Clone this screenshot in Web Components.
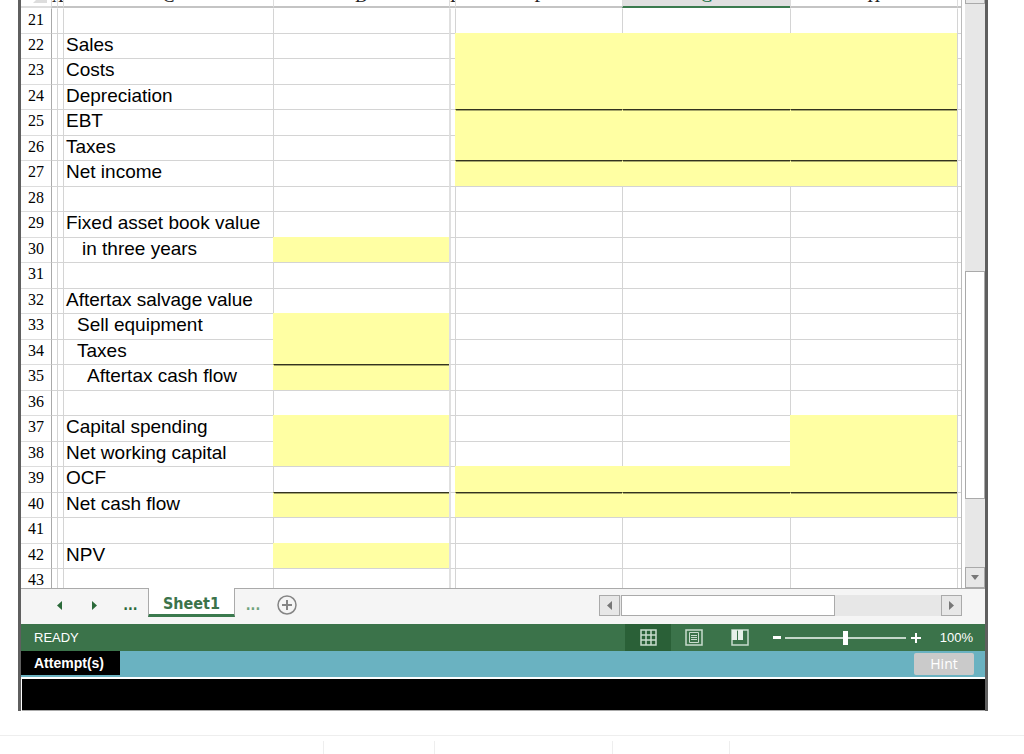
<!DOCTYPE html>
<html lang="en">
<head>
<meta charset="utf-8">
<title>Sheet1</title>
<style>
    body {
        margin: 0;
        background: #fff;
        font-family: "Liberation Sans", Arial, sans-serif;
        overflow: hidden;
    }
</style>
</head>
<body>
<sheet-window>
    <sheet-grid></sheet-grid>
    <scroll-rail slot="rail"></scroll-rail>
    <sheet-tabs slot="footer">Sheet1</sheet-tabs>
    <status-bar slot="footer">READY</status-bar>
    <attempt-bar slot="footer">Attempt(s)</attempt-bar>
</sheet-window>
<page-footer></page-footer>

<script>
class SheetWindow extends HTMLElement {
    constructor() {
        super();
        this.attachShadow({ mode: 'open' });
    }

    connectedCallback() {
        this.shadowRoot.innerHTML = `
            <style>
                :host {
                    display: block;
                    margin: 0 36px 0 18px;
                    border: 0 solid #5f5f5f;
                    border-width: 0 3px;
                }
                .view {
                    display: flex;
                }
                .sheet {
                    flex: 1;
                    min-width: 0;
                    overflow: hidden;
                }
                .log {
                    height: 31px;
                    margin-left: 1px;
                    background: #000;
                    border-top: 2px solid #fff;
                    border-bottom: 1px solid #aaa;
                }
            </style>
            <div class="view">
                <div class="sheet"><slot></slot></div>
                <slot name="rail"></slot>
            </div>
            <slot name="footer"></slot>
            <div class="log"></div>
        `;
    }
}

const COLUMNS = ['A', 'B', 'C', 'D', 'E', 'F', 'G', 'H', ''];
const YEARS = 'FGH';

// fill: input cells, total: cells with a dark line above them
const ROWS = {
    22: { label: 'Sales', fill: YEARS },
    23: { label: 'Costs', fill: YEARS },
    24: { label: 'Depreciation', fill: YEARS },
    25: { label: 'EBT', fill: YEARS, total: YEARS },
    26: { label: 'Taxes', fill: YEARS },
    27: { label: 'Net income', fill: YEARS, total: YEARS },
    29: { label: 'Fixed asset book value' },
    30: { label: 'in three years', indent: 'mid', fill: 'D' },
    32: { label: 'Aftertax salvage value' },
    33: { label: 'Sell equipment', indent: 'low', fill: 'D' },
    34: { label: 'Taxes', indent: 'low', fill: 'D' },
    35: { label: 'Aftertax cash flow', indent: 'high', fill: 'D', total: 'D' },
    37: { label: 'Capital spending', fill: 'DH' },
    38: { label: 'Net working capital', fill: 'DH' },
    39: { label: 'OCF', fill: YEARS },
    40: { label: 'Net cash flow', fill: 'DFGH', total: 'DFGH' },
    42: { label: 'NPV', fill: 'D' }
};

class SheetGrid extends HTMLElement {
    constructor() {
        super();
        this.attachShadow({ mode: 'open' });
    }

    connectedCallback() {
        this.render();
    }

    renderCell(name, row) {
        const classes = [];
        if (name === 'C' && row.indent) classes.push(row.indent);
        if (name === 'E') classes.push('split');
        if (name && row.fill && row.fill.includes(name)) classes.push('fill');
        if (name && row.total && row.total.includes(name)) classes.push('total');
        return `<td class="${classes.join(' ')}">${name === 'C' && row.label ? row.label : ''}</td>`;
    }

    render() {
        let rowsHtml = '';
        for (let n = 21; n <= 43; n++) {
            const row = ROWS[n] || {};
            rowsHtml += `
                <tr>
                    <th scope="row">${n}</th>
                    ${COLUMNS.map(name => this.renderCell(name, row)).join('')}
                </tr>`;
        }

        this.shadowRoot.innerHTML = `
            <style>
                :host {
                    display: block;
                    height: 588px;
                    overflow: hidden;
                    margin-right: 3px;
                }
                table {
                    width: 100%;
                    margin-top: -18px;
                    table-layout: fixed;
                    border-collapse: separate;
                    border-spacing: 0;
                    border-right: 1px solid #bbb;
                }
                .number { width: 30px; }
                .sliver { width: 6px; }
                .label { width: 210px; }
                .base { width: 176px; }
                .edge { width: 4px; }
                th, td {
                    padding: 0;
                    box-sizing: border-box;
                    overflow: hidden;
                    white-space: nowrap;
                }
                thead th {
                    height: 26px;
                    padding-top: 4px;
                    font: 18px/20px "Liberation Serif", "Times New Roman", serif;
                    color: #222;
                    border-left: 1px solid #ddd;
                    border-bottom: 2px solid #c4c4c4;
                }
                thead th:first-child {
                    border-left: 0;
                    border-bottom-color: #ddd;
                }
                thead th.active {
                    background: #e0e0e0;
                    color: #217346;
                    border-bottom-color: #3b7a4e;
                }
                thead svg {
                    display: block;
                    margin-left: 12px;
                }
                tbody th {
                    font: 16px/22px "Liberation Serif", "Times New Roman", serif;
                    color: #000;
                    border-top: 1px solid #ddd;
                    vertical-align: top;
                }
                tbody td {
                    height: 25px;
                    padding-left: 2px;
                    font-size: 19px;
                    line-height: 21px;
                    color: #000;
                    border-left: 1px solid #d4d4d4;
                    border-top: 1px solid #d4d4d4;
                    vertical-align: top;
                }
                tbody tr:nth-child(odd) td { height: 26px; }
                tbody tr:first-child td { height: 25px; }
                tbody tr:first-child th, tbody tr:first-child td { border-top-color: transparent; }
                tbody td:nth-child(2) { border-left-color: #aaa; }
                tbody td:nth-child(2), tbody td:nth-child(3) { padding: 0; }
                tbody td.split { border-left: 2px solid #e0e0e0; padding: 0; }
                tbody td:last-child { padding: 0; }
                td.low { padding-left: 13px; }
                td.mid { padding-left: 18px; }
                td.high { padding-left: 23px; }
                tbody td.fill {
                    background: #ffffa3;
                    border-color: #ffffa3;
                }
                tbody td.total {
                    border-top-color: #33331f;
                    box-shadow: inset 0 1px rgba(0, 0, 0, 0.35);
                }
            </style>
            <table>
                <colgroup>
                    <col class="number"><col class="sliver"><col class="sliver">
                    <col class="label"><col class="base"><col class="sliver">
                    <col><col><col><col class="edge">
                </colgroup>
                <thead>
                    <tr>
                        <th><svg width="14" height="14"><path d="M14 0V14H0Z" fill="#ddd"/></svg></th>
                        ${COLUMNS.map(name => `<th class="${name === 'G' ? 'active' : ''}">${name}</th>`).join('')}
                    </tr>
                </thead>
                <tbody>${rowsHtml}</tbody>
            </table>
        `;
    }
}

class ScrollRail extends HTMLElement {
    constructor() {
        super();
        this.attachShadow({ mode: 'open' });
    }

    connectedCallback() {
        this.shadowRoot.innerHTML = `
            <style>
                :host {
                    display: flex;
                    flex-direction: column;
                    width: 20px;
                    background: #e7e7e7;
                }
                button {
                    display: flex;
                    align-items: center;
                    justify-content: center;
                    height: 21px;
                    padding: 0;
                    border: 1px solid #aaa;
                    background: #e7e7e7;
                }
                .up { height: 4px; border-top: 0; }
                .before { flex: 268; }
                .thumb {
                    flex: 227;
                    box-sizing: border-box;
                    background: #fff;
                    border: 1px solid #aaa;
                }
                .after { flex: 68; }
            </style>
            <button class="up" aria-label="Scroll up"></button>
            <div class="before"></div>
            <div class="thumb"></div>
            <div class="after"></div>
            <button aria-label="Scroll down"><svg width="10" height="6"><path d="M1 0H9L5 5Z" fill="#777"/></svg></button>
        `;
    }
}

class SheetTabs extends HTMLElement {
    constructor() {
        super();
        this.attachShadow({ mode: 'open' });
    }

    connectedCallback() {
        this.shadowRoot.innerHTML = `
            <style>
                :host {
                    display: flex;
                    height: 35px;
                    border-top: 1px solid #aaa;
                    background: #f5f5f5;
                    font-family: "DejaVu Sans Condensed", Tahoma, sans-serif;
                }
                button {
                    display: flex;
                    align-items: center;
                    justify-content: center;
                    padding: 0;
                    border: 0;
                    background: none;
                    color: #2b6a3a;
                    font: inherit;
                }
                .nav {
                    display: flex;
                    align-items: center;
                    box-sizing: border-box;
                    width: 127px;
                    height: 32px;
                    padding-left: 21px;
                }
                .nav button { width: 36px; height: 20px; }
                .nav .dots, .dots {
                    width: 36px;
                    font-size: 14px;
                    font-weight: bold;
                }
                .tab {
                    width: 87px;
                    height: 29px;
                    margin-top: -1px;
                    padding-top: 4px;
                    box-sizing: border-box;
                    border: 1px solid #aaa;
                    border-top: 0;
                    border-bottom: 3px solid #3b7a4e;
                    background: #fff;
                    color: #3b734a;
                    font-size: 16px;
                    font-weight: bold;
                }
                .more {
                    display: flex;
                    flex: 1;
                    align-items: center;
                    height: 32px;
                    gap: 6px;
                }
                .more .dots { color: #6fa37c; }
                .scroll {
                    display: flex;
                    width: 363px;
                    height: 21px;
                    margin: 6px 23px 0 0;
                    background: #e7e7e7;
                }
                .scroll button {
                    width: 21px;
                    border: 1px solid #aaa;
                    background: #e7e7e7;
                }
                .thumb {
                    flex: 214;
                    margin-left: 1px;
                    box-sizing: border-box;
                    border: 1px solid #aaa;
                    background: #fff;
                }
                .rest { flex: 107; }
            </style>
            <div class="nav">
                <button aria-label="Previous sheet"><svg width="5" height="9"><path d="M5 0V9L0 4.500Z" fill="#2b6a3a"/></svg></button>
                <button aria-label="Next sheet"><svg width="5" height="9"><path d="M0 0V9L5 4.500Z" fill="#2b6a3a"/></svg></button>
                <button class="dots">...</button>
            </div>
            <button class="tab"><slot></slot></button>
            <div class="more">
                <button class="dots">...</button>
                <button aria-label="New sheet">
                    <svg width="20" height="20" fill="none" stroke="#858585">
                        <circle cx="10" cy="10" r="9" stroke-width="1.5"/>
                        <path d="M10 5V15M5 10H15" stroke-width="2"/>
                    </svg>
                </button>
            </div>
            <div class="scroll">
                <button aria-label="Scroll left"><svg width="5" height="9"><path d="M5 0V9L0 4.500Z" fill="#777"/></svg></button>
                <div class="thumb"></div>
                <div class="rest"></div>
                <button aria-label="Scroll right"><svg width="5" height="9"><path d="M0 0V9L5 4.500Z" fill="#777"/></svg></button>
            </div>
        `;
    }
}

class StatusBar extends HTMLElement {
    constructor() {
        super();
        this.attachShadow({ mode: 'open' });
    }

    connectedCallback() {
        this.shadowRoot.innerHTML = `
            <style>
                :host {
                    display: flex;
                    align-items: center;
                    height: 27px;
                    padding: 0 12px 0 13px;
                    background: #3b734a;
                    color: #fff;
                    font-size: 13px;
                }
                .state { flex: 1; }
                button {
                    display: flex;
                    align-items: center;
                    justify-content: center;
                    width: 46px;
                    height: 27px;
                    padding: 0;
                    border: 0;
                    background: none;
                }
                button.active { background: #2a6037; }
                button.zoom { width: 12px; }
                .views {
                    display: flex;
                    margin-right: 8px;
                }
                input {
                    -webkit-appearance: none;
                    appearance: none;
                    width: 121px;
                    height: 14px;
                    margin: 0 4px 0 2px;
                    background: linear-gradient(#c5d8ca, #c5d8ca) center / 100% 2px no-repeat;
                }
                input::-webkit-slider-thumb {
                    -webkit-appearance: none;
                    width: 5px;
                    height: 14px;
                    background: #fff;
                }
                .percent {
                    width: 35px;
                    margin-left: 16px;
                    text-align: right;
                }
            </style>
            <span class="state"><slot></slot></span>
            <div class="views">
                <button class="active" aria-label="Normal view">
                    <svg width="17" height="17" fill="none" stroke="#c8dccd">
                        <path d="M1 1H16V16H1ZM6 1V16M11 1V16M1 6H16M1 11H16" stroke-width="1.5"/>
                    </svg>
                </button>
                <button aria-label="Page layout">
                    <svg width="18" height="17" fill="none" stroke="#c8dccd">
                        <path d="M1 1H17V16H1Z" stroke-width="1.5"/>
                        <path d="M4.500 3.500H13.500V13.500H4.500Z"/>
                        <path d="M6 6.500H12M6 8.500H12M6 10.500H12"/>
                    </svg>
                </button>
                <button aria-label="Page break preview">
                    <svg width="18" height="17">
                        <path d="M1 1H17V16H1Z" fill="none" stroke="#c8dccd" stroke-width="1.500"/>
                        <path d="M1 1H6V11H1ZM7 1H12V11H7Z" fill="#e6f0e8"/>
                    </svg>
                </button>
            </div>
            <button class="zoom" aria-label="Zoom out"><svg width="8" height="3"><path d="M0 0H8V3H0Z" fill="#fff"/></svg></button>
            <input type="range" min="0" max="200" value="100" aria-label="Zoom">
            <button class="zoom" aria-label="Zoom in"><svg width="10" height="10"><path d="M4 0H6V4H10V6H6V10H4V6H0V4H4Z" fill="#fff"/></svg></button>
            <span class="percent">100%</span>
        `;
    }
}

class AttemptBar extends HTMLElement {
    constructor() {
        super();
        this.attachShadow({ mode: 'open' });
    }

    connectedCallback() {
        this.shadowRoot.innerHTML = `
            <style>
                :host {
                    display: flex;
                    justify-content: space-between;
                    height: 26px;
                    background: #6ab2c1;
                }
                .title {
                    height: 24px;
                    padding: 0 16px 0 13px;
                    background: #000;
                    color: #fff;
                    font-size: 14px;
                    font-weight: bold;
                    line-height: 24px;
                }
                button {
                    width: 60px;
                    height: 22px;
                    margin: 2px 11px 0 0;
                    padding: 0;
                    border: 0;
                    border-radius: 2px;
                    background: #cacaca;
                    color: #fff;
                    font: 14px/22px "Open Sans", sans-serif;
                }
            </style>
            <span class="title"><slot></slot></span>
            <button>Hint</button>
        `;
    }
}

class PageFooter extends HTMLElement {
    constructor() {
        super();
        this.attachShadow({ mode: 'open' });
    }

    connectedCallback() {
        this.shadowRoot.innerHTML = `
            <style>
                :host {
                    display: flex;
                    height: 13px;
                    margin-top: 24px;
                    padding-top: 5px;
                    border-top: 1px solid #eee;
                }
                div {
                    box-sizing: border-box;
                    border-right: 1px solid #eee;
                }
                .wide { width: 324px; }
                .narrow { width: 111px; }
                .middle { width: 178px; }
                .last { width: 117px; }
            </style>
            <div class="wide"></div>
            <div class="narrow"></div>
            <div class="middle"></div>
            <div class="last"></div>
        `;
    }
}

customElements.define('sheet-window', SheetWindow);
customElements.define('sheet-grid', SheetGrid);
customElements.define('scroll-rail', ScrollRail);
customElements.define('sheet-tabs', SheetTabs);
customElements.define('status-bar', StatusBar);
customElements.define('attempt-bar', AttemptBar);
customElements.define('page-footer', PageFooter);
</script>
</body>
</html>
